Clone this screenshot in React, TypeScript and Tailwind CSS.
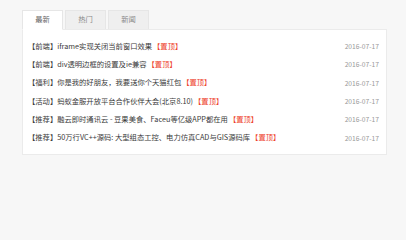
import React, { useState } from 'react';

const tabs = ['最新', '热门', '新闻'];

const news = [
    { tag: '前端', title: 'iframe实现关闭当前窗口效果', date: '2016-07-17' },
    { tag: '前端', title: 'div透明边框的设置及ie兼容', date: '2016-07-17' },
    { tag: '福利', title: '你是我的好朋友，我要送你个天猫红包', date: '2016-07-17' },
    { tag: '活动', title: '蚂蚁金服开放平台合作伙伴大会(北京8.10)', date: '2016-07-17' },
    { tag: '推荐', title: '融云即时通讯云 - 豆果美食、Faceu等亿级APP都在用', date: '2016-07-17' },
    { tag: '推荐', title: '50万行VC++源码: 大型组态工控、电力仿真CAD与GIS源码库', date: '2016-07-17' },
];

const App: React.FC = () => {
    const [active, setActive] = useState(0);

    return (
        <div className="w-[406px] h-[240px] bg-[#f7f7f7] pt-[10px] pl-[22px] font-['Noto_Sans_CJK_SC','Noto_Sans',sans-serif] text-[#3a3a3a]">
            <div className="w-[365px]">
                {/* tabs */}
                <div className="flex gap-[2px]">
                    {tabs.map((tab, i) => (
                        <button
                            key={tab}
                            onClick={() => setActive(i)}
                            className={
                                i === active
                                    ? 'relative z-10 -mb-px w-[41px] h-[20px] bg-white border border-[#e6e6e6] border-b-white text-[7.3px] text-[#666] leading-none'
                                    : 'w-[41px] h-[19px] bg-[#efefef] border border-[#e6e6e6] border-b-0 text-[7.3px] text-[#888] leading-none'
                            }
                        >
                            {tab}
                        </button>
                    ))}
                </div>

                {/* list */}
                <div className="bg-white border border-[#ebebeb] pt-[7px] pb-[7px] pl-[5px] pr-[7px]">
                    {news.map((item, i) => (
                        <div key={i} className="flex items-center justify-between h-[18.3px]">
                            <div className="text-[7.3px] whitespace-nowrap">
                                【{item.tag}】{item.title}
                                <span className="ml-[1px] text-[#ee3f2c]">【置顶】</span>
                            </div>
                            <span className="text-[6.7px] text-[#999]">{item.date}</span>
                        </div>
                    ))}
                </div>
            </div>
        </div>
    );
};

export default App;
